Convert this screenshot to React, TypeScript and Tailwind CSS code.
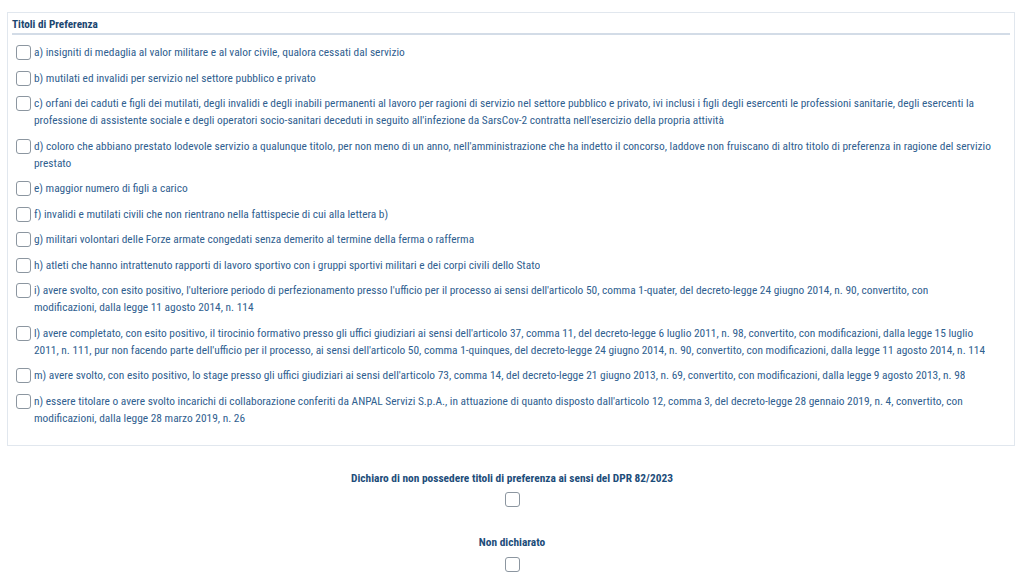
const items: string[][] = [
  ["a) insigniti di medaglia al valor militare e al valor civile, qualora cessati dal servizio"],
  ["b) mutilati ed invalidi per servizio nel settore pubblico e privato"],
  [
    "c) orfani dei caduti e figli dei mutilati, degli invalidi e degli inabili permanenti al lavoro per ragioni di servizio nel settore pubblico e privato, ivi inclusi i figli degli esercenti le professioni sanitarie, degli esercenti la",
    "professione di assistente sociale e degli operatori socio-sanitari deceduti in seguito all'infezione da SarsCov-2 contratta nell'esercizio della propria attività",
  ],
  [
    "d) coloro che abbiano prestato lodevole servizio a qualunque titolo, per non meno di un anno, nell'amministrazione che ha indetto il concorso, laddove non fruiscano di altro titolo di preferenza in ragione del servizio",
    "prestato",
  ],
  ["e) maggior numero di figli a carico"],
  ["f) invalidi e mutilati civili che non rientrano nella fattispecie di cui alla lettera b)"],
  ["g) militari volontari delle Forze armate congedati senza demerito al termine della ferma o rafferma"],
  ["h) atleti che hanno intrattenuto rapporti di lavoro sportivo con i gruppi sportivi militari e dei corpi civili dello Stato"],
  [
    "i) avere svolto, con esito positivo, l'ulteriore periodo di perfezionamento presso l'ufficio per il processo ai sensi dell'articolo 50, comma 1-quater, del decreto-legge 24 giugno 2014, n. 90, convertito, con",
    "modificazioni, dalla legge 11 agosto 2014, n. 114",
  ],
  [
    "l) avere completato, con esito positivo, il tirocinio formativo presso gli uffici giudiziari ai sensi dell'articolo 37, comma 11, del decreto-legge 6 luglio 2011, n. 98, convertito, con modificazioni, dalla legge 15 luglio",
    "2011, n. 111, pur non facendo parte dell'ufficio per il processo, ai sensi dell'articolo 50, comma 1-quinques, del decreto-legge 24 giugno 2014, n. 90, convertito, con modificazioni, dalla legge 11 agosto 2014, n. 114",
  ],
  ["m) avere svolto, con esito positivo, lo stage presso gli uffici giudiziari ai sensi dell'articolo 73, comma 14, del decreto-legge 21 giugno 2013, n. 69, convertito, con modificazioni, dalla legge 9 agosto 2013, n. 98"],
  [
    "n) essere titolare o avere svolto incarichi di collaborazione conferiti da ANPAL Servizi S.p.A., in attuazione di quanto disposto dall'articolo 12, comma 3, del decreto-legge 28 gennaio 2019, n. 4, convertito, con",
    "modificazioni, dalla legge 28 marzo 2019, n. 26",
  ],
];

function Box() {
  return <span className="block h-[15px] w-[15px] shrink-0 rounded-[3px] border border-[#8c96a0] bg-white" />;
}

export default function App() {
  return (
    <div className="min-h-[578px] bg-white pt-[12px] font-['Roboto_Condensed',sans-serif]">
      <div className="ml-[7px] mr-[9px] border border-[#e1e7ee] px-[4px] pb-[18px] pt-[5px]">
        <div className="border-b-2 border-[#d3dce7] pb-[1px] text-[11.2px] font-bold leading-[14px] text-[#1b4670]">
          Titoli di Preferenza
        </div>
        <div className="mt-[9px] flex flex-col gap-[8.5px]">
          {items.map((lines) => (
            <label key={lines[0]} className="flex items-start gap-[3px] pl-[4px]">
              <span className="pt-[1px]">
                <Box />
              </span>
              <span className="min-w-0 overflow-hidden text-[11.4px] leading-[17px] text-[#30608f]">
                {lines.map((l) => (
                  <span key={l} className="block whitespace-nowrap">
                    {l}
                  </span>
                ))}
              </span>
            </label>
          ))}
        </div>
      </div>
      <div className="mt-[24px] flex flex-col items-center">
        <div className="text-[11.4px] font-bold leading-[16px] text-[#1d4d7a]">
          Dichiaro di non possedere titoli di preferenza ai sensi del DPR 82/2023
        </div>
        <div className="mt-[6px]">
          <Box />
        </div>
        <div className="mt-[27px] text-[11.4px] font-bold leading-[16px] text-[#1d4d7a]">Non dichiarato</div>
        <div className="mt-[7px]">
          <Box />
        </div>
      </div>
    </div>
  );
}
